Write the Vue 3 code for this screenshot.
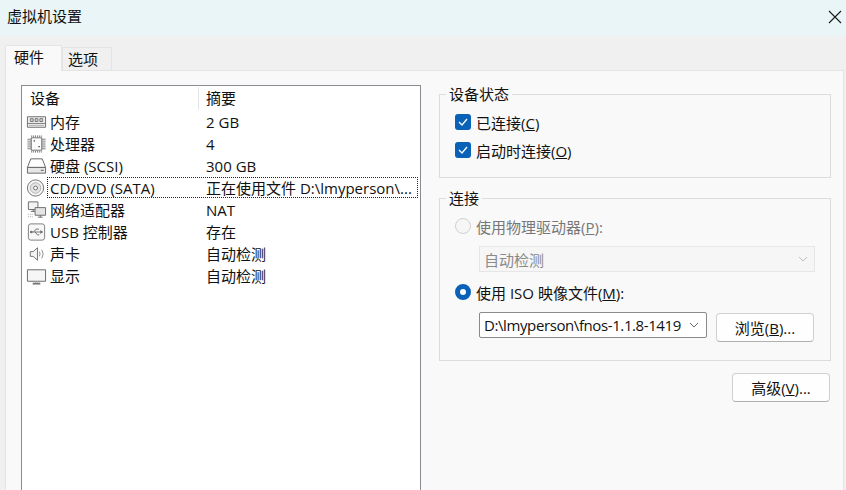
<script setup>
const rows = [
  { icon: 'mem', name: '内存', value: '2 GB' },
  { icon: 'cpu', name: '处理器', value: '4' },
  { icon: 'hdd', name: '硬盘 (SCSI)', value: '300 GB' },
  { icon: 'cd', name: 'CD/DVD (SATA)', value: '正在使用文件 D:\\lmyperson\\...', focus: true },
  { icon: 'net', name: '网络适配器', value: 'NAT' },
  { icon: 'usb', name: 'USB 控制器', value: '存在' },
  { icon: 'snd', name: '声卡', value: '自动检测' },
  { icon: 'mon', name: '显示', value: '自动检测' }
]
</script>

<template>
  <div class="win">
    <header class="title">
      <span>虚拟机设置</span>
      <svg class="close" width="14" height="14" viewBox="0 0 14 14"><path d="M1 1 13 13M13 1 1 13" stroke="#1a1a1a" stroke-width="1.1" fill="none"/></svg>
    </header>
    <nav class="tabs">
      <div class="tab active">硬件</div>
      <div class="tab">选项</div>
    </nav>
    <main class="panel">
      <section class="list">
        <div class="lhead">
          <div class="hc1">设备</div>
          <div class="hc2">摘要</div>
        </div>
        <div v-for="r in rows" :key="r.name" class="row">
          <span class="ico">
            <svg width="22" height="20" viewBox="0 0 22 20" fill="none" stroke="#6a6a6a" stroke-width="1">
              <template v-if="r.icon === 'mem'">
                <path d="M1.500 4.500h19v11h-19z" fill="#f2f2f2"/>
                <path d="M1.500 11.500h19" stroke="#777"/>
                <path d="M4.500 6.500h3v3h-3zM9.500 6.500h3v3h-3zM14.500 6.500h3v3h-3z" fill="#cfcfcf" stroke="#777"/>
                <path d="M3 13.500h16" stroke="#aaa"/>
              </template>
              <template v-else-if="r.icon === 'cpu'">
                <path d="M5.500 3.500h11v13h-11z" fill="#fbfbfb" stroke="#6f6f6f"/>
                <path d="M6 1v2M8 1v2M10 1v2M12 1v2M14 1v2M16 1v2M6 17v2M8 17v2M10 17v2M12 17v2M14 17v2M16 17v2M1.500 5h4M1.500 7h4M1.500 9h4M1.500 11h4M1.500 13h4M1.500 15h4M16.500 5h4M16.500 7h4M16.500 9h4M16.500 11h4M16.500 13h4M16.500 15h4" stroke="#7c7c7c"/>
                <path d="M8 6h1.500v1.500H8zM13 12h1.500v1.500H13z" fill="#444" stroke="none"/>
              </template>
              <template v-else-if="r.icon === 'hdd'">
                <path d="M5 2.500h12l3.500 9h-19z" fill="#fdfdfd" stroke="#666"/>
                <path d="M1.500 11.500h19v6h-19z" fill="#e6e6e6" stroke="#666"/>
                <path d="M15.500 14.500h3" stroke="#555"/>
              </template>
              <template v-else-if="r.icon === 'cd'">
                <circle cx="10" cy="10" r="8.500" fill="#f6f6f6" stroke="#6e6e6e"/>
                <circle cx="10" cy="10" r="5.500" fill="#e4e4e4" stroke="#b0b0b0"/>
                <circle cx="10" cy="10" r="2" fill="#fff" stroke="#666"/>
              </template>
              <template v-else-if="r.icon === 'net'">
                <path d="M2.500 1.500h10v8h-10z" fill="#f3f3f3"/>
                <path d="M5 11.500h5M7.500 9.500v2" />
                <path d="M9.500 7.500h11v8h-11z" fill="#e4e4e4"/>
                <path d="M12.500 17.500h5M15 15.500v2" />
                <path d="M2 14.500h6M2 17h6" stroke="#a8a8a8" stroke-dasharray="1 1"/>
              </template>
              <template v-else-if="r.icon === 'usb'">
                <rect x="2.500" y="1.500" width="17" height="17" rx="2.500" fill="#f7f7f7" stroke="#7c7c7c"/>
                <path d="M5.500 10h10M8 10l2.500-3h3M9.500 10l2.500 3h2" stroke="#6f6f6f"/>
                <path d="M15 8 18 10l-3 2z" fill="#6f6f6f" stroke="none"/>
                <circle cx="5.500" cy="10" r="1.300" fill="#6f6f6f" stroke="none"/>
              </template>
              <template v-else-if="r.icon === 'snd'">
                <path d="M4.500 7.500h3l4.500-4v13l-4.500-4h-3z" fill="#f4f4f4" stroke="#707070"/>
                <path d="M14 7.500q1.500 2.500 0 5M16.500 5.500q3 4.500 0 9" stroke="#8c8c8c"/>
              </template>
              <template v-else>
                <path d="M1.500 3.500h19v12h-19z" fill="#f6f6f6" stroke="#666"/>
                <path d="M7 18h8" stroke="#777" stroke-width="2"/>
                <path d="M10 15.500v2M12 15.500v2" stroke="#aaa"/>
              </template>
            </svg>
          </span>
          <div class="cells" :class="{ focus: r.focus }">
            <span class="name">{{ r.name }}</span>
            <span class="val">{{ r.value }}</span>
          </div>
        </div>
      </section>

      <aside class="side">
        <fieldset class="group g1">
          <legend>设备状态</legend>
          <label class="opt">
            <span class="check"><svg width="10" height="8" viewBox="0 0 10 8"><path d="M1 4l3 3 5-6" stroke="#fff" stroke-width="1.300" fill="none"/></svg></span>
            <span>已连接(<u>C</u>)</span>
          </label>
          <label class="opt">
            <span class="check"><svg width="10" height="8" viewBox="0 0 10 8"><path d="M1 4l3 3 5-6" stroke="#fff" stroke-width="1.300" fill="none"/></svg></span>
            <span>启动时连接(<u>O</u>)</span>
          </label>
        </fieldset>

        <fieldset class="group g2">
          <legend>连接</legend>
          <label class="opt dis">
            <span class="radio"></span>
            <span>使用物理驱动器(<u>P</u>):</span>
          </label>
          <div class="sel seldis">
            <span>自动检测</span>
            <svg width="10" height="6" viewBox="0 0 10 6"><path d="M1 1l4 4 4-4" stroke="#bdbdbd" fill="none"/></svg>
          </div>
          <label class="opt o3">
            <span class="radio on"></span>
            <span>使用 ISO 映像文件(<u>M</u>):</span>
          </label>
          <div class="fileline">
            <div class="sel selon">
              <span class="path">D:\lmyperson\fnos-1.1.8-1419</span>
              <svg width="10" height="6" viewBox="0 0 10 6"><path d="M1 1l4 4 4-4" stroke="#666" fill="none"/></svg>
            </div>
            <button class="btn">浏览(<u>B</u>)...</button>
          </div>
        </fieldset>

        <div class="adv">
          <button class="btn">高级(<u>V</u>)...</button>
        </div>
      </aside>
    </main>
  </div>
</template>

<style scoped>
.win {
  width: 846px;
  height: 490px;
  overflow: hidden;
  display: flex;
  flex-direction: column;
  background: #f0f0f0;
  color: #111;
  font-family: "Open Sans", "Noto Sans CJK SC", sans-serif;
  font-size: 15px;
  box-sizing: border-box;
}
.title {
  height: 36px;
  flex: none;
  background: #e9f5f7;
  display: flex;
  align-items: center;
  justify-content: space-between;
  padding: 0 3px 6px 7px;
  box-sizing: border-box;
}
.close { margin-right: 1px; margin-top: 4px; }
.tabs {
  height: 34px;
  flex: none;
  display: flex;
  align-items: flex-end;
  padding-left: 5px;
  position: relative;
  z-index: 1;
}
.tab {
  width: 50px;
  height: 23px;
  line-height: 23px;
  padding-left: 5px;
  box-sizing: border-box;
  border: 1px solid #e4e4e4;
  border-bottom: 0;
  background: #f0f0f0;
}
.tab.active {
  width: 57px;
  height: 26px;
  line-height: 22px;
  padding-left: 8px;
  background: #f9f9f9;
  margin-bottom: -1px;
  border-radius: 2px 2px 0 0;
}
.panel {
  flex: 1;
  margin: 0 2px 0 5px;
  border: 1px solid #e4e4e4;
  background: #f9f9f9;
  display: flex;
  box-sizing: border-box;
  padding: 14px 0 0 15px;
  min-height: 430px;
}
.list {
  width: 400px;
  flex: none;
  height: 420px;
  border: 1px solid #8b8b93;
  background: #fff;
  box-sizing: border-box;
}
.lhead {
  display: flex;
  height: 25px;
  padding-top: 1px;
  box-sizing: border-box;
}
.hc1 {
  width: 177px;
  padding-left: 8px;
  box-sizing: border-box;
  height: 23px;
  line-height: 23px;
  border-right: 1px solid #e5e5e5;
}
.hc2 { padding-left: 7px; line-height: 23px; }
.row { display: flex; height: 22px; }
.ico {
  width: 25px;
  flex: none;
  padding-left: 4px;
  box-sizing: border-box;
  display: flex;
  align-items: center;
}
.cells {
  width: 371px;
  height: 21px;
  border: 1px dotted transparent;
  box-sizing: border-box;
  display: flex;
  align-items: center;
  padding-left: 2px;
  white-space: nowrap;
}
.cells.focus { border-color: #222; }
.name { width: 156px; flex: none; }
.side {
  width: 392px;
  flex: none;
  margin-left: 18px;
  display: flex;
  flex-direction: column;
}
.group {
  margin: 0;
  padding: 0;
  border: 1px solid #dcdcdc;
  box-sizing: border-box;
  min-width: 0;
}
.group legend {
  margin-left: -9px;
  padding: 0 3px;
  line-height: 18px;
  height: 18px;
}
.g1 { height: 93px; padding: 11px 0 0 15px; }
.g2 { height: 172px; margin-top: 11px; padding: 11px 0 0 15px; }
.opt {
  display: flex;
  align-items: center;
  gap: 5px;
  height: 16px;
  margin-bottom: 12px;
  white-space: nowrap;
}
.check {
  width: 16px;
  height: 16px;
  border-radius: 3px;
  background: #0a62b8;
  display: flex;
  align-items: center;
  justify-content: center;
}
.radio {
  width: 16px;
  height: 16px;
  border-radius: 50%;
  box-sizing: border-box;
  border: 1px solid #d0d0d0;
  background: #f6f6f6;
}
.radio.on {
  border: 5px solid #0a62b8;
  background: #fff;
}
.dis { color: #777; }
.sel {
  box-sizing: border-box;
  height: 26px;
  display: flex;
  align-items: center;
  justify-content: space-between;
  padding: 0 7px 0 4px;
  white-space: nowrap;
}
.seldis {
  width: 336px;
  margin-left: 24px;
  padding-right: 6px;
  border: 1px solid #e6e6e6;
  background: #f6f6f6;
  color: #8a8a8a;
}
.o3 { margin-top: 12px; margin-bottom: 12px; }
.fileline { display: flex; margin-left: 24px; gap: 9px; align-items: flex-start; }
.selon {
  width: 228px;
  border: 1px solid #8a8a8a;
  border-radius: 2px;
  background: #fff;
}
.path { letter-spacing: -0.4px; }
.btn {
  width: 98px;
  height: 29px;
  padding: 0;
  box-sizing: border-box;
  border: 1px solid #d0d0d0;
  border-bottom-color: #b0b0b0;
  border-radius: 4px;
  background: #fefefe;
  font: inherit;
  color: inherit;
}
.fileline .btn { margin-top: 1px; }
.adv { display: flex; justify-content: flex-end; margin-top: 12px; margin-right: 1px; }
</style>

<style>
html, body { margin: 0; padding: 0; overflow: hidden; background: #f0f0f0; }
</style>
